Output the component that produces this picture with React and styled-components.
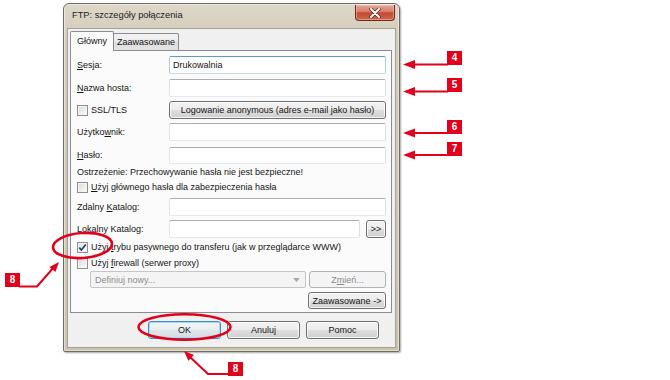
import React from 'react';
import styled, { createGlobalStyle, css } from 'styled-components';

const Global = createGlobalStyle`
  html, body { margin: 0; padding: 0; background: #fff; }
  body { font-family: "Liberation Sans", Arial, sans-serif; }
  #root { width: 670px; height: 380px; }
  * { box-sizing: border-box; }
`;

const RED = '#e2001a';

const Page = styled.div`
  position: relative;
  width: 670px;
  height: 380px;
  overflow: hidden;
  background: #fff;
  font-family: "Liberation Sans", Arial, sans-serif;
  font-size: 9px;
  color: #141414;
`;

const Window = styled.div`
  position: absolute;
  left: 63px;
  top: 3px;
  width: 337px;
  height: 349px;
  border: 1px solid #6f6c64;
  border-radius: 6px 6px 2px 2px;
  background: linear-gradient(180deg, #ddd7c8 0%, #d3ccb9 10%, #cbc3ae 100%);
  box-shadow: 1px 1px 2px rgba(0, 0, 0, 0.35), inset 0 0 0 1px rgba(255, 255, 255, 0.45);
  display: flex;
  flex-direction: column;
  padding: 0 4px 4px 4px;
`;

const TitleBar = styled.div`
  height: 25px;
  display: flex;
  justify-content: space-between;
  align-items: flex-start;
`;

const Title = styled.div`
  padding: 6px 0 0 4px;
  font-size: 9.3px;
  line-height: 10px;
  color: #1c1c1c;
`;

const CloseButton = styled.div`
  width: 40px;
  height: 16px;
  margin-top: 1px;
  border: 1px solid #6b2a20;
  border-top: none;
  border-radius: 0 0 4px 4px;
  background: linear-gradient(180deg, #e4a697 0%, #d67b68 45%, #c34a33 52%, #d2644c 100%);
  box-shadow: inset 0 0 0 1px rgba(255, 210, 200, 0.45);
  display: flex;
  align-items: center;
  justify-content: center;
`;

const Client = styled.div`
  flex: 1;
  background: #f0f0f0;
  box-shadow: 0 0 0 1px #a6a193;
  display: flex;
  flex-direction: column;
  padding: 2px 3px 0 2px;
`;

const TabStrip = styled.div`
  height: 19px;
  display: flex;
  align-items: flex-end;
`;

const Tab = styled.div`
  position: relative;
  border: 1px solid #898c95;
  border-bottom: none;
  border-radius: 2px 2px 0 0;
  font-size: 9px;
  white-space: nowrap;
  ${p => p.$active ? css`
    height: 20px;
    margin-bottom: -1px;
    z-index: 1;
    padding: 4px 6px 0;
    background: #fbfbfb;
  ` : css`
    height: 17px;
    margin-left: -1px;
    padding: 3px 3px 0;
    background: linear-gradient(180deg, #f3f3f3 0%, #ebebeb 50%, #dddddd 51%, #e4e4e4 100%);
  `}
`;

const Panel = styled.div`
  height: 263px;
  border: 1px solid #898c95;
  background: #fbfbfb;
  padding: 5px 5px 0 6px;
  display: flex;
  flex-direction: column;
`;

const Field = styled.div`
  display: grid;
  grid-template-columns: 92px 1fr;
  align-items: center;
  height: ${p => p.$h || 18}px;
  margin-top: ${p => p.$mt || 0}px;
`;

const Row = styled.div`
  display: flex;
  align-items: center;
  gap: ${p => p.$gap || 0}px;
  justify-content: ${p => p.$end ? 'flex-end' : 'flex-start'};
  height: ${p => p.$h || 12}px;
  margin-top: ${p => p.$mt || 0}px;
  padding-left: ${p => p.$indent || 0}px;
`;

const Label = styled.span`
  line-height: 11px;
  white-space: nowrap;
`;

const TextBox = styled.input`
  width: ${p => p.$w ? `${p.$w}px` : '100%'};
  height: 100%;
  margin: 0;
  padding: 0 3px;
  border: 1px solid;
  border-color: ${p => p.$focus ? '#5b9bd0 #a9cdea #bcdcf2 #a9cdea' : '#abadb3 #dbdfe6 #e3e9ef #e2e3ea'};
  border-radius: 2px;
  background: #fff;
  font-family: "Liberation Sans", Arial, sans-serif;
  font-size: 9px;
  color: #141414;
  outline: none;
`;

const Button = styled.div`
  width: ${p => p.$w ? `${p.$w}px` : '100%'};
  height: ${p => p.$h || 18}px;
  border: 1px solid #707070;
  border-radius: 3px;
  background: linear-gradient(180deg, #f3f3f3 0%, #ececec 48%, #dedede 52%, #d0d0d0 100%);
  box-shadow: inset 0 0 0 1px rgba(255, 255, 255, 0.75);
  display: flex;
  align-items: center;
  justify-content: center;
  font-size: 9px;
  white-space: nowrap;
  color: #141414;
  ${p => p.$default && css`
    border-color: #3d8ccb;
    box-shadow: inset 0 0 0 1px #9fdaf7;
    background: linear-gradient(180deg, #f1f5f8 0%, #e9eef1 48%, #dfe5ea 52%, #d5dde3 100%);
  `}
  ${p => p.$disabled && css`
    border-color: #adb2b5;
    background: #f4f4f4;
    box-shadow: none;
    color: #8a8a8a;
  `}
`;

const Check = styled.span`
  width: 11px;
  height: 11px;
  flex: none;
  border: 1px solid #8e8f8f;
  background: linear-gradient(135deg, #d9dadb 0%, #f6f6f6 80%);
  box-shadow: inset 0 0 0 1px #f4f4f4;
  display: flex;
  align-items: center;
  justify-content: center;
`;

const CheckRow = styled(Row)`
  gap: 3px;
`;

const Combo = styled.div`
  width: 216px;
  height: 17px;
  border: 1px solid #c3c5c8;
  border-radius: 2px;
  background: #f4f4f4;
  color: #8d8d8d;
  display: flex;
  align-items: center;
  justify-content: space-between;
  padding: 0 5px 0 4px;
  font-size: 9px;
`;

const ButtonBar = styled.div`
  display: flex;
  justify-content: flex-end;
  gap: 6px;
  padding: 8px 13px 0 0;
`;

const Badge = styled.div`
  position: absolute;
  left: ${p => p.$x}px;
  top: ${p => p.$y}px;
  width: 15px;
  height: 14px;
  background: ${RED};
  color: #fff;
  font-family: "Liberation Sans", Arial, sans-serif;
  font-weight: bold;
  font-size: 10px;
  line-height: 14px;
  text-align: center;
`;

const Overlay = styled.svg`
  position: absolute;
  left: 0;
  top: 0;
  pointer-events: none;
`;

const CheckBox = ({ checked }) => (
  <Check>
    {checked && (
      <svg width="9" height="9" viewBox="0 0 9 9">
        <path d="M1.3 4.6 L3.4 7 L7.8 1.4" fill="none" stroke="#22386b" strokeWidth="1.6" />
      </svg>
    )}
  </Check>
);

const HArrow = ({ y }) => (
  <g>
    <line x1="412" y1={y} x2="448" y2={y} stroke={RED} strokeWidth="2" />
    <polygon points={`403,${y} 415,${y - 4.5} 415,${y + 4.5}`} fill={RED} />
  </g>
);

export default function App() {
  return (
    <Page>
      <Global />
      <Window>
        <TitleBar>
          <Title>FTP: szczegóły połączenia</Title>
          <CloseButton>
            <svg width="12" height="10" viewBox="0 0 12 10">
              <path d="M2 1 L10 9 M10 1 L2 9" stroke="#5a2018" strokeWidth="3.4" strokeLinecap="round" />
              <path d="M2 1 L10 9 M10 1 L2 9" stroke="#fff" strokeWidth="2" strokeLinecap="round" />
            </svg>
          </CloseButton>
        </TitleBar>
        <Client>
          <TabStrip>
            <Tab $active>Główny</Tab>
            <Tab>Zaawasowane</Tab>
          </TabStrip>
          <Panel>
            <Field>
              <Label><u>S</u>esja:</Label>
              <TextBox $focus readOnly defaultValue="Drukowalnia" />
            </Field>
            <Field $mt={5}>
              <Label><u>N</u>azwa hosta:</Label>
              <TextBox readOnly defaultValue="" />
            </Field>
            <Field $mt={4}>
              <CheckRow $h={18}>
                <CheckBox />
                <Label>SSL/TLS</Label>
              </CheckRow>
              <Button>Logowanie anonymous (adres e-mail jako hasło)</Button>
            </Field>
            <Field $mt={4}>
              <Label>Użytko<u>w</u>nik:</Label>
              <TextBox readOnly defaultValue="" />
            </Field>
            <Field $mt={6} $h={17}>
              <Label><u>H</u>asło:</Label>
              <TextBox readOnly defaultValue="" />
            </Field>
            <Row $mt={2}>
              <Label>Ostrzeżenie: Przechowywanie hasła nie jest bezpieczne!</Label>
            </Row>
            <CheckRow $mt={3}>
              <CheckBox />
              <Label><u>U</u>żyj głównego hasła dla zabezpieczenia hasła</Label>
            </CheckRow>
            <Field $mt={5}>
              <Label>Zdalny <u>K</u>atalog:</Label>
              <TextBox readOnly defaultValue="" />
            </Field>
            <Field $mt={4}>
              <Label>Lok<u>a</u>lny Katalog:</Label>
              <Row $h={18} $gap={6}>
                <TextBox $w={191} readOnly defaultValue="" />
                <Button $w={20}>&gt;&gt;</Button>
              </Row>
            </Field>
            <CheckRow $mt={3}>
              <CheckBox checked />
              <Label>Użyj <u>t</u>rybu pasywnego do transferu (jak w przeglądarce WWW)</Label>
            </CheckRow>
            <CheckRow $mt={4}>
              <CheckBox />
              <Label>Użyj <u>f</u>irewall (serwer proxy)</Label>
            </CheckRow>
            <Row $mt={2} $h={17} $gap={3} $indent={13}>
              <Combo>
                <span>Definiuj nowy...</span>
                <svg width="7" height="4" viewBox="0 0 7 4">
                  <polygon points="0,0 7,0 3.5,4" fill="#a9a9a9" />
                </svg>
              </Combo>
              <Button $w={77} $h={17} $disabled>Z<u>m</u>ień...</Button>
            </Row>
            <Row $mt={4} $h={17} $end>
              <Button $w={78} $h={17}>Zaawasowane -&gt;</Button>
            </Row>
          </Panel>
          <ButtonBar>
            <Button $w={73} $default>OK</Button>
            <Button $w={73}>Anuluj</Button>
            <Button $w={73}>Pomoc</Button>
          </ButtonBar>
        </Client>
      </Window>

      <Overlay width="670" height="380" viewBox="0 0 670 380">
        <HArrow y={64.5} />
        <HArrow y={91.5} />
        <HArrow y={133} />
        <HArrow y={155} />
        <ellipse cx="82.5" cy="245.5" rx="29.5" ry="12.5" transform="rotate(-4 82.5 245.5)" fill="none" stroke={RED} strokeWidth="2.6" />
        <ellipse cx="184.5" cy="327" rx="46" ry="12.8" fill="none" stroke={RED} strokeWidth="2.6" />
        <polyline points="19,286.5 37,286.5 54,267" fill="none" stroke={RED} strokeWidth="2" />
        <polygon points="59,262 55.4,272.1 49.4,266.9" fill={RED} />
        <polyline points="228,374 208,374 190,357" fill="none" stroke={RED} strokeWidth="2" />
        <polygon points="184,351 194,355 188.4,360.8" fill={RED} />
      </Overlay>
      <Badge $x={447} $y={51}>4</Badge>
      <Badge $x={447} $y={78}>5</Badge>
      <Badge $x={447} $y={120}>6</Badge>
      <Badge $x={447} $y={142}>7</Badge>
      <Badge $x={5} $y={273}>8</Badge>
      <Badge $x={228} $y={362}>8</Badge>
    </Page>
  );
}
